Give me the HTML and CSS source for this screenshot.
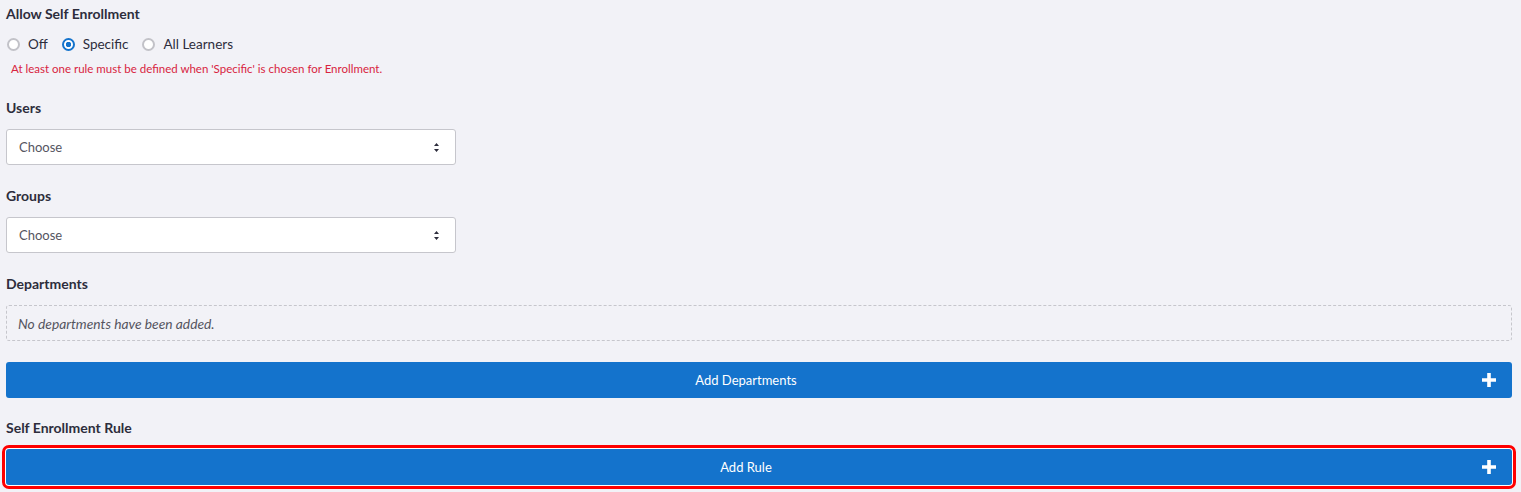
FILE: index.html
```html
<!DOCTYPE html>
<html lang="en">
<head>
  <meta charset="UTF-8">
  <meta name="viewport" content="width=device-width, initial-scale=1.0">
  <title>Self Enrollment</title>
  <link rel="stylesheet" href="styles.css">
</head>
<body>
  <div class="form">
    <div class="field field-radios">
      <div class="label">Allow Self Enrollment</div>
      <div class="radio-group">
        <label class="radio"><span class="dot"></span>Off</label>
        <label class="radio checked"><span class="dot"></span>Specific</label>
        <label class="radio"><span class="dot"></span>All Learners</label>
      </div>
      <div class="error">At least one rule must be defined when 'Specific' is chosen for Enrollment.</div>
    </div>

    <div class="field">
      <div class="label">Users</div>
      <div class="select">
        <span>Choose</span>
        <svg width="7" height="11" viewBox="0 0 7 11"><path d="M3.5 1 L6 4 H1 Z M3.5 10 L6 7 H1 Z" fill="#2d2d3c"/></svg>
      </div>
    </div>

    <div class="field">
      <div class="label">Groups</div>
      <div class="select">
        <span>Choose</span>
        <svg width="7" height="11" viewBox="0 0 7 11"><path d="M3.5 1 L6 4 H1 Z M3.5 10 L6 7 H1 Z" fill="#2d2d3c"/></svg>
      </div>
    </div>

    <div class="field">
      <div class="label">Departments</div>
      <div class="empty-box">No departments have been added.</div>
    </div>

    <button class="add-button">
      Add Departments
      <svg class="plus" width="16" height="16" viewBox="0 0 16 16"><path d="M8 1 V15 M1 8 H15" stroke="#fff" stroke-width="3.6"/></svg>
    </button>

    <div class="field">
      <div class="label">Self Enrollment Rule</div>
      <button class="add-button highlighted">
        Add Rule
        <svg class="plus" width="16" height="16" viewBox="0 0 16 16"><path d="M8 1 V15 M1 8 H15" stroke="#fff" stroke-width="3.6"/></svg>
      </button>
    </div>
  </div>
</body>
</html>
```

FILE: styles.css
```css
body {
  margin: 0;
  background-color: #f2f2f7;
  color: #2d2d3c;
  font-family: Lato, "Open Sans", sans-serif;
  font-size: 13.5px;
}

.form {
  padding: 4px 9px 0 6px;
  display: flex;
  flex-direction: column;
}

.field {
  margin-bottom: 21px;
}

.label {
  font-size: 14px;
  font-weight: bold;
  line-height: 20px;
  margin-bottom: 11px;
}

.field-radios .label {
  margin-bottom: 10px;
}

.radio-group {
  display: flex;
  height: 20px;
  align-items: center;
}

.radio {
  display: flex;
  align-items: center;
  margin-right: 13px;
  padding-left: 1px;
}

.dot {
  width: 13px;
  height: 13px;
  box-sizing: border-box;
  border: 2px solid #c2c2c8;
  border-radius: 50%;
  background: #fff;
  margin-right: 8px;
}

.radio.checked .dot {
  border-color: #1473cc;
  background: radial-gradient(circle, #1473cc 2.5px, #fff 3px);
}

.error {
  color: #d8243f;
  font-size: 11.5px;
  line-height: 14px;
  margin-top: 8px;
  margin-bottom: 1px;
  padding-left: 5px;
}

.select {
  width: 450px;
  height: 36px;
  box-sizing: border-box;
  border: 1px solid #c6c6cc;
  border-radius: 3px;
  background: #fff;
  display: flex;
  align-items: center;
  justify-content: space-between;
  padding: 0 15px 0 12px;
  color: #55555f;
  font-size: 13px;
}

.empty-box {
  height: 36px;
  box-sizing: border-box;
  border: 1px dashed #c6c6cc;
  border-radius: 3px;
  display: flex;
  align-items: center;
  padding-left: 11px;
  font-style: italic;
  font-size: 13.8px;
  color: #55555f;
}

.add-button {
  position: relative;
  height: 36px;
  border: none;
  border-radius: 3px;
  background-color: #1473cc;
  color: #fff;
  font-family: inherit;
  font-size: 13px;
  width: 100%;
  padding: 0 26px 0 0;
  margin-bottom: 20px;
}

.add-button .plus {
  position: absolute;
  right: 15px;
  top: 10px;
}

.add-button.highlighted {
  margin-bottom: 0;
  outline: 3px solid #ff0000;
  outline-offset: 1px;
  box-shadow: 0 0 0 1px #ffffff;
}
```
